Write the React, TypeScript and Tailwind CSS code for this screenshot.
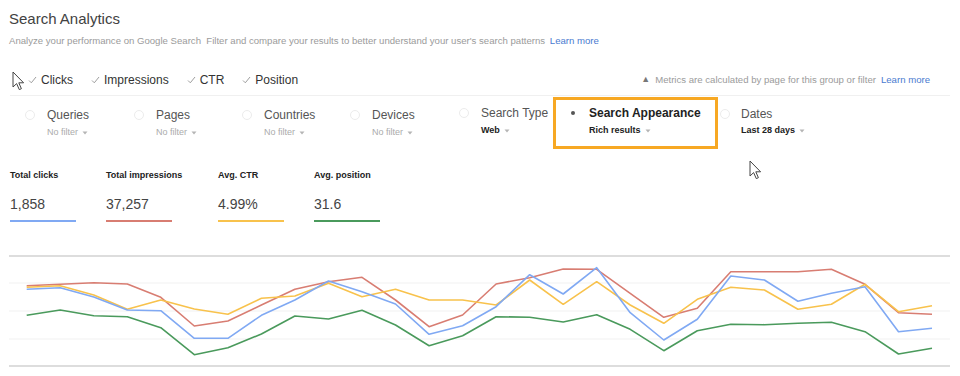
import React from 'react';

const FONT = "font-['Liberation_Sans',Arial,sans-serif]";

// chart series, y in page pixels (chart starts at y=250)
const SERIES: { color: string; ys: number[] }[] = [
  {
    color: '#d87d72',
    ys: [285.7, 284.3, 282.7, 284, 297.3, 326, 321, 305, 289.3, 281.7, 277.3, 300, 326.7, 315, 284, 277.7, 269, 269.3, 293.3, 317.3, 308.3, 271.7, 271.7, 271.7, 269.3, 284.3, 312.7, 314.3],
  },
  {
    color: '#f8c24c',
    ys: [287.3, 285.7, 295, 309.3, 300, 309, 314.3, 298.3, 296, 283.3, 296.7, 289.3, 300, 300, 305, 280, 304.3, 281.7, 305, 323.3, 299.3, 287.3, 290, 309.3, 304.3, 284.3, 311.7, 305.7],
  },
  {
    color: '#80a9f3',
    ys: [289.3, 287.7, 297, 310, 310.7, 338.3, 338.3, 315.3, 300, 281, 291.7, 304, 334.3, 325.7, 306.7, 274.7, 294, 267.7, 312.7, 340, 319.3, 276, 280, 301.3, 293.3, 286.7, 331.7, 328.3],
  },
  {
    color: '#4a9a5c',
    ys: [315.3, 310, 315.7, 316.7, 327.7, 354.7, 347.7, 334, 316, 319, 310.3, 325, 345.7, 335.7, 316.7, 317.3, 322, 314.7, 329.3, 350.7, 330.7, 324.3, 324.7, 323.3, 322.3, 331.7, 354, 348.3],
  },
];

function Check() {
  return (
    <svg width="9" height="8" viewBox="0 0 9 8" className="shrink-0">
      <path d="M1 4.5 L3.3 6.8 L8 1" fill="none" stroke="#9e9e9e" strokeWidth="1" />
    </svg>
  );
}

function Caret() {
  return (
    <svg width="6" height="4" viewBox="0 0 6 4" className="ml-[4px] mt-[1px] shrink-0">
      <path d="M0.5 0.5 L5.5 0.5 L3 3.5 Z" fill="#b5b5b5" />
    </svg>
  );
}

function Cursor() {
  return (
    <svg width="13" height="20" viewBox="0 0 13 20">
      <path
        d="M1 1 L1 16 L4.6 12.6 L7.3 18.6 L9.4 17.7 L6.8 11.8 L11.6 11.8 Z"
        fill="#fff"
        stroke="#444"
        strokeWidth="1"
        strokeLinejoin="round"
      />
    </svg>
  );
}

function FilterCol({ label, value, strong, width, top }: { label: string; value: string; strong?: boolean; width: string; top: string }) {
  return (
    <div className={`flex ${width} ${top}`}>
      <div className="mt-[3px] h-[10px] w-[10px] shrink-0 rounded-full border border-[#ececec]" />
      <div className="ml-[12px] flex flex-col">
        <span className="text-[12px] leading-[16px] text-[#555]">{label}</span>
        <span
          className={`mt-[3px] flex items-center text-[9px] leading-[12px] ${strong ? 'font-bold text-[#222]' : 'text-[#ababab]'}`}
        >
          {value}
          <Caret />
        </span>
      </div>
    </div>
  );
}

const METRICS = [
  { label: 'Total clicks', value: '1,858', color: 'bg-[#80a9f3]', w: 'w-[96px]' },
  { label: 'Total impressions', value: '37,257', color: 'bg-[#d87d72]', w: 'w-[112px]' },
  { label: 'Avg. CTR', value: '4.99%', color: 'bg-[#f8c24c]', w: 'w-[96px]' },
  { label: 'Avg. position', value: '31.6', color: 'bg-[#4a9a5c]', w: 'w-[96px]' },
];

export default function App() {
  const x0 = 26.7;
  const step = 33.53;
  return (
    <div className={`relative h-[376px] w-[960px] overflow-hidden bg-white ${FONT} text-[#333]`}>
      {/* header */}
      <div className="px-[9px] pt-[8px]">
        <h1 className="text-[15px] leading-[22px] text-[#424242]">Search Analytics</h1>
        <p className="mt-[4px] text-[9.6px] leading-[14px] text-[#9b9b9b]">
          Analyze your performance on Google Search&nbsp; Filter and compare your results to better understand your user's search patterns{' '}
          <span className="ml-[2px] text-[#4a7bd0]">Learn more</span>
        </p>
      </div>

      {/* metric toggles */}
      <div className="mt-[20px] flex h-[24px] items-center justify-between pl-[28px] pr-[30px]">
        <div className="flex items-center gap-[18px] text-[12px] text-[#333]">
          {['Clicks', 'Impressions', 'CTR', 'Position'].map((m) => (
            <div key={m} className="flex items-center gap-[4px]">
              <Check />
              <span>{m}</span>
            </div>
          ))}
        </div>
        <div className="flex items-center text-[9.6px] text-[#9b9b9b]">
          <span className="mr-[5px] text-[9px] text-[#777]">▲</span>
          <span>Metrics are calculated by page for this group or filter</span>
          <span className="ml-[5px] text-[#4a7bd0]">Learn more</span>
        </div>
      </div>
      <div className="mx-[10px] mt-[3px] border-t border-[#f0f0f0]" />

      {/* filters */}
      <div className="mt-[1px] flex h-[52px] pl-[25px]">
        <FilterCol label="Queries" value="No filter" width="w-[109px]" top="pt-[10px]" />
        <FilterCol label="Pages" value="No filter" width="w-[108px]" top="pt-[10px]" />
        <FilterCol label="Countries" value="No filter" width="w-[108px]" top="pt-[10px]" />
        <FilterCol label="Devices" value="No filter" width="w-[109px]" top="pt-[10px]" />
        <FilterCol label="Search Type" value="Web" strong width="w-[94px]" top="pt-[8px]" />
        <div className="flex w-[165px] border-[3px] border-[#f7a823] pl-[15px] pt-[5px]">
          <div className="mt-[6px] h-[4px] w-[4px] shrink-0 rounded-full bg-[#555]" />
          <div className="ml-[14px] flex flex-col">
            <span className="text-[12px] font-bold leading-[16px] text-[#222]">Search Appearance</span>
            <span className="mt-[3px] flex items-center text-[9px] font-bold leading-[12px] text-[#222]">
              Rich results
              <Caret />
            </span>
          </div>
        </div>
        <div className="ml-[2px] flex pt-[9px]">
          <div className="mt-[3px] h-[10px] w-[10px] shrink-0 rounded-full border border-[#ececec]" />
          <div className="ml-[11px] flex flex-col">
            <span className="text-[12px] leading-[16px] text-[#555]">Dates</span>
            <span className="mt-[2px] flex items-center text-[9px] font-bold leading-[12px] text-[#222]">
              Last 28 days
              <Caret />
            </span>
          </div>
        </div>
      </div>

      {/* totals */}
      <div className="mt-[20px] flex pl-[10px]">
        {METRICS.map((m) => (
          <div key={m.label} className={`flex flex-col ${m.w}`}>
            <span className="text-[9px] font-bold leading-[12px] text-[#222]">{m.label}</span>
            <span className="mt-[13px] text-[14px] leading-[20px] text-[#444]">{m.value}</span>
            <div className={`mt-[6px] h-[2px] w-[66px] ${m.color}`} />
          </div>
        ))}
      </div>

      {/* chart */}
      <svg className="mt-[28px] block" width="960" height="126" viewBox="0 250 960 126">
        <line x1="9" x2="950" y1="256" y2="256" stroke="#d2d2d2" strokeWidth="1.5" />
        {[283, 311, 339].map((y) => (
          <line key={y} x1="9" x2="950" y1={y} y2={y} stroke="#f1f1f1" strokeWidth="1" />
        ))}
        <line x1="9" x2="950" y1="366" y2="366" stroke="#d2d2d2" strokeWidth="1.5" />
        {SERIES.map((s) => (
          <polyline
            key={s.color}
            fill="none"
            stroke={s.color}
            strokeWidth="1.6"
            strokeLinejoin="round"
            points={s.ys.map((y, i) => `${(x0 + step * i).toFixed(1)},${y}`).join(' ')}
          />
        ))}
      </svg>

      {/* mouse pointers from the recording */}
      <div className="absolute left-[12px] top-[71px]">
        <Cursor />
      </div>
      <div className="absolute left-[749px] top-[160px]">
        <Cursor />
      </div>
    </div>
  );
}
